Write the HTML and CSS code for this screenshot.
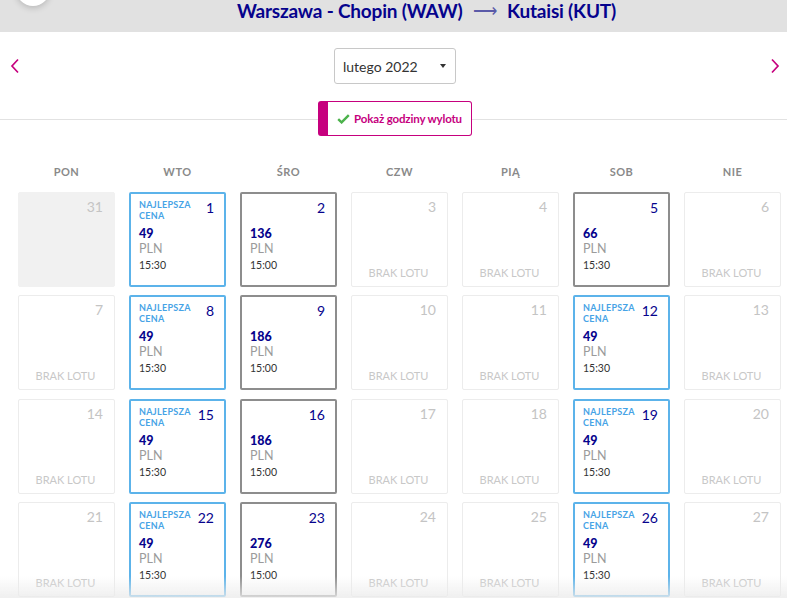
FILE: index.html
```html
<!DOCTYPE html>
<html lang="pl">
<head>
    <meta charset="UTF-8">
    <title>Kalendarz lotów</title>
    <link rel="stylesheet" href="styles.css">
</head>
<body>
    <header class="route-bar">
        <div class="avatar"></div>
        <h1 class="route">Warszawa - Chopin (WAW) <span class="route-arrow">&#10230;</span> Kutaisi (KUT)</h1>
    </header>

    <div class="month-nav">
        <button class="nav-arrow" aria-label="Poprzedni miesiąc">
            <svg width="10" height="16" viewBox="0 0 10 16"><path d="M8 1.5 L2 8 L8 14.5" fill="none" stroke="#c6007e" stroke-width="1.7"/></svg>
        </button>
        <div class="month-select">
            <span>lutego 2022</span>
            <span class="caret"></span>
        </div>
        <button class="nav-arrow" aria-label="Następny miesiąc">
            <svg width="10" height="16" viewBox="0 0 10 16"><path d="M2 1.5 L8 8 L2 14.5" fill="none" stroke="#c6007e" stroke-width="1.7"/></svg>
        </button>
    </div>

    <div class="toggle-row">
        <button class="toggle">
            <svg width="13" height="10" viewBox="0 0 13 10"><path d="M1.2 5.2 L4.6 8.4 L11.8 1.2" fill="none" stroke="#4bb24b" stroke-width="2.4"/></svg>
            Pokaż godziny wylotu
        </button>
    </div>

    <div class="weekdays">
        <div>PON</div><div>WTO</div><div>ŚRO</div><div>CZW</div><div>PIĄ</div><div>SOB</div><div>NIE</div>
    </div>

    <div class="calendar" id="calendar"></div>

    <div class="bottom-fade"></div>

    <script>
        // day: [type, price, time]  type: p = poprzedni miesiąc, n = brak lotu, f = lot, b = najlepsza cena
        const days = [
            [31, 'p'], [1, 'b', 49, '15:30'], [2, 'f', 136, '15:00'], [3, 'n'], [4, 'n'], [5, 'f', 66, '15:30'], [6, 'n'],
            [7, 'n'], [8, 'b', 49, '15:30'], [9, 'f', 186, '15:00'], [10, 'n'], [11, 'n'], [12, 'b', 49, '15:30'], [13, 'n'],
            [14, 'n'], [15, 'b', 49, '15:30'], [16, 'f', 186, '15:00'], [17, 'n'], [18, 'n'], [19, 'b', 49, '15:30'], [20, 'n'],
            [21, 'n'], [22, 'b', 49, '15:30'], [23, 'f', 276, '15:00'], [24, 'n'], [25, 'n'], [26, 'b', 49, '15:30'], [27, 'n']
        ];

        const calendar = document.getElementById('calendar');
        days.forEach(([day, type, price, time]) => {
            const cell = document.createElement('div');
            cell.className = 'day';
            let html = '<div class="day-top">';
            if (type === 'b') {
                html += '<span class="best">NAJLEPSZA<br>CENA</span>';
            } else {
                html += '<span></span>';
            }
            html += '<span class="day-num">' + day + '</span></div>';

            if (type === 'p') {
                cell.classList.add('past');
            } else if (type === 'n') {
                cell.classList.add('empty');
                html += '<div class="no-flight">BRAK LOTU</div>';
            } else {
                cell.classList.add(type === 'b' ? 'best-price' : 'flight');
                html += '<div class="price">' + price + '</div>';
                html += '<div class="currency">PLN</div>';
                html += '<div class="time">' + time + '</div>';
            }
            cell.innerHTML = html;
            calendar.appendChild(cell);
        });
    </script>
</body>
</html>
```

FILE: styles.css
```css
body {
    margin: 0;
    font-family: Lato, "Open Sans", sans-serif;
    background: #fff;
    color: #333;
    overflow: hidden;
}

/* top band with the route */
.route-bar {
    position: relative;
    height: 32px;
    background: #e1e1e1;
    display: flex;
    justify-content: center;
    padding-left: 66px;
    box-sizing: border-box;
}
.avatar {
    position: absolute;
    left: 16px;
    top: -28px;
    width: 34px;
    height: 34px;
    border-radius: 50%;
    background: #fff;
    box-shadow: 0 2px 6px rgba(0, 0, 0, 0.18);
}
.route {
    margin: 1px 0 0 0;
    font-size: 19px;
    line-height: 20px;
    font-weight: 700;
    color: #06038d;
    letter-spacing: -0.2px;
}
.route-arrow {
    display: inline-block;
    margin: 0 6px;
    font-weight: 400;
    color: #5a5aa8;
    font-size: 17px;
    vertical-align: 1px;
}

/* month picker */
.month-nav {
    display: flex;
    align-items: center;
    justify-content: space-between;
    padding: 16px 3px 0 6px;
}
.nav-arrow {
    border: none;
    background: none;
    padding: 4px;
    display: flex;
}
.month-select {
    width: 104px;
    height: 34px;
    border: 1px solid #c8c8c8;
    border-radius: 3px;
    display: flex;
    align-items: center;
    justify-content: space-between;
    padding: 0 8px;
    font-size: 14px;
    color: #333;
}
.caret {
    width: 0;
    height: 0;
    border-left: 3px solid transparent;
    border-right: 3px solid transparent;
    border-top: 4px solid #333;
    margin-right: 1px;
}

/* flight times toggle sitting on the divider */
.toggle-row {
    position: relative;
    display: flex;
    justify-content: center;
    margin-top: 17px;
}
.toggle-row::before {
    content: "";
    position: absolute;
    left: 0;
    right: 0;
    top: 18px;
    border-top: 1px solid #e2e2e2;
}
.toggle {
    position: relative;
    display: flex;
    align-items: center;
    gap: 4px;
    height: 35px;
    padding: 0 9px 0 9px;
    margin-left: 3px;
    background: #fff;
    border: 1.5px solid #c6007e;
    border-left: 10px solid #c6007e;
    border-radius: 3px;
    font-family: Lato, sans-serif;
    font-size: 11.5px;
    font-weight: 700;
    letter-spacing: -0.15px;
    color: #c6007e;
    white-space: nowrap;
}

/* calendar */
.weekdays {
    display: grid;
    grid-template-columns: repeat(7, 97px);
    column-gap: 14px;
    padding-left: 18px;
    margin-top: 28px;
    text-align: center;
    font-size: 11px;
    line-height: 16px;
    font-weight: 700;
    color: #8a8a8a;
    letter-spacing: 0.5px;
}
.calendar {
    display: grid;
    grid-template-columns: repeat(7, 97px);
    grid-auto-rows: 95px;
    column-gap: 14px;
    row-gap: 8.3px;
    padding-left: 18px;
    margin-top: 12px;
}
.day {
    box-sizing: border-box;
    display: flex;
    flex-direction: column;
    padding: 5px 11px 0 9px;
    border: 1px solid #ececec;
    border-radius: 2px;
    background: #fff;
}
.day.best-price {
    border: 2px solid #5cb3ea;
    padding: 5px 10px 0 8px;
}
.day.flight {
    border: 2px solid #8d8d8d;
    padding: 5px 10px 0 8px;
}
.day.past {
    background: #f1f1f1;
    border-color: #f1f1f1;
}
.day-top {
    display: flex;
    justify-content: space-between;
    align-items: flex-start;
    height: 21px;
}
.day-num {
    font-size: 14px;
    line-height: 14px;
    margin-top: 2px;
    color: #06038d;
}
.day.empty .day-num,
.day.past .day-num {
    color: #c4c4c4;
}
.best {
    font-size: 9px;
    line-height: 11px;
    font-weight: 700;
    letter-spacing: 0.3px;
    color: #46a3e6;
}
.price {
    margin-top: 6px;
    font-size: 12.5px;
    line-height: 15px;
    font-weight: 900;
    color: #06038d;
}
.currency {
    font-size: 12.5px;
    line-height: 15px;
    color: #9b9b9b;
}
.time {
    margin-top: 3px;
    font-size: 10.5px;
    line-height: 13px;
    color: #333;
}
.no-flight {
    margin-top: auto;
    margin-bottom: 7px;
    text-align: center;
    font-size: 11px;
    line-height: 13px;
    color: #c8c8c8;
}

.bottom-fade {
    position: fixed;
    left: 0;
    right: 0;
    bottom: 0;
    height: 22px;
    background: linear-gradient(rgba(235, 235, 235, 0), rgba(235, 235, 235, 0.8));
}
```
